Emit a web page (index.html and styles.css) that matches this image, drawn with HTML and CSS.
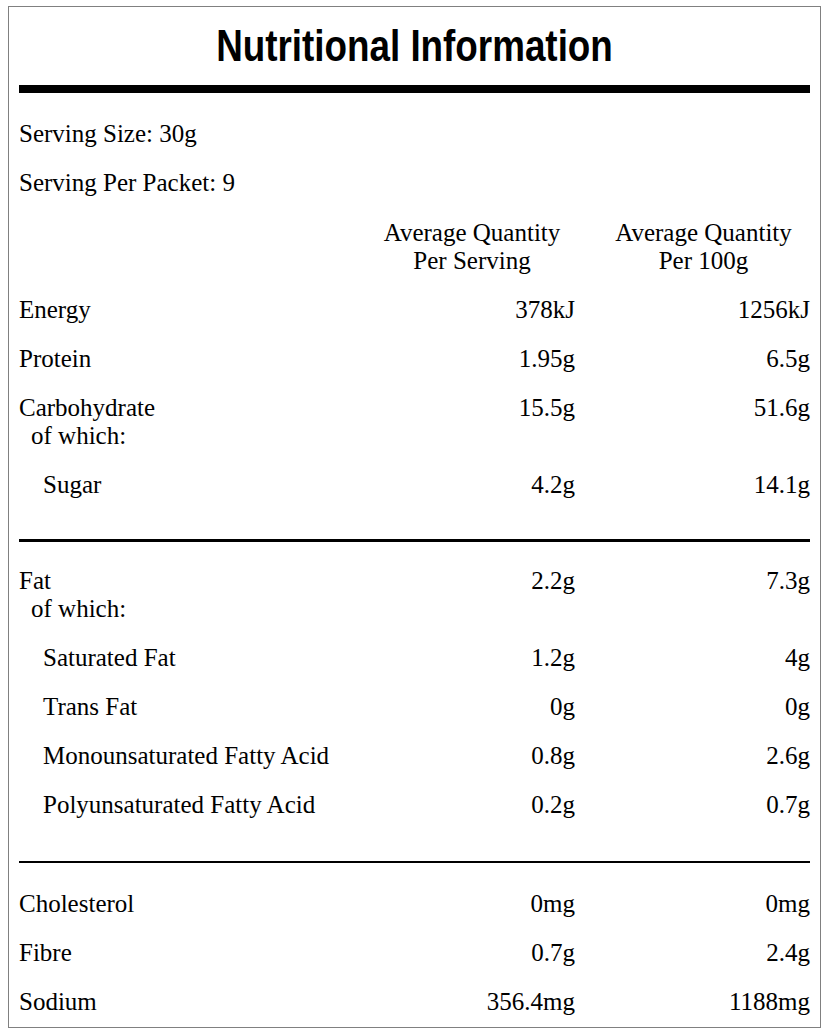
FILE: index.html
```html
<!DOCTYPE html>
<html lang="en">
<head>
<meta charset="utf-8">
<title>Nutritional Information</title>
<link rel="stylesheet" href="styles.css">
</head>
<body>
<div class="panel">
  <h1 class="title"><span class="title-text">Nutritional Information</span></h1>
  <div class="rule rule-thick"></div>
  <p class="meta">Serving Size: 30g</p>
  <p class="meta">Serving Per Packet: 9</p>

  <div class="table">
    <div class="row head">
      <div></div>
      <div class="colhead">Average Quantity<br>Per Serving</div>
      <div class="colhead">Average Quantity<br>Per 100g</div>
    </div>
    <div class="row">
      <div class="name">Energy</div><div class="val">378kJ</div><div class="val">1256kJ</div>
    </div>
    <div class="row">
      <div class="name">Protein</div><div class="val">1.95g</div><div class="val">6.5g</div>
    </div>
    <div class="row">
      <div class="name">Carbohydrate<br><span class="sub1">of which:</span></div><div class="val">15.5g</div><div class="val">51.6g</div>
    </div>
    <div class="row">
      <div class="name sub2">Sugar</div><div class="val">4.2g</div><div class="val">14.1g</div>
    </div>

    <div class="rule rule-mid"></div>

    <div class="row">
      <div class="name">Fat<br><span class="sub1">of which:</span></div><div class="val">2.2g</div><div class="val">7.3g</div>
    </div>
    <div class="row">
      <div class="name sub2">Saturated Fat</div><div class="val">1.2g</div><div class="val">4g</div>
    </div>
    <div class="row">
      <div class="name sub2">Trans Fat</div><div class="val">0g</div><div class="val">0g</div>
    </div>
    <div class="row">
      <div class="name sub2">Monounsaturated Fatty Acid</div><div class="val">0.8g</div><div class="val">2.6g</div>
    </div>
    <div class="row">
      <div class="name sub2">Polyunsaturated Fatty Acid</div><div class="val">0.2g</div><div class="val">0.7g</div>
    </div>

    <div class="rule rule-thin"></div>

    <div class="row">
      <div class="name">Cholesterol</div><div class="val">0mg</div><div class="val">0mg</div>
    </div>
    <div class="row">
      <div class="name">Fibre</div><div class="val">0.7g</div><div class="val">2.4g</div>
    </div>
    <div class="row">
      <div class="name">Sodium</div><div class="val">356.4mg</div><div class="val">1188mg</div>
    </div>
  </div>
</div>
</body>
</html>
```

FILE: styles.css
```css
html, body {
  margin: 0;
  padding: 0;
  background: #ffffff;
}

body {
  padding: 6px 0 0 8px;
  font-family: "Liberation Serif", "Times New Roman", serif;
  font-size: 25px;
  line-height: 28px;
  color: #000;
}

.panel {
  box-sizing: border-box;
  width: 813px;
  border: 1px solid #808080;
  padding: 0 10px 11px 10px;
}

.title {
  margin: 0;
  padding-top: 16px;
  height: 62px;
  box-sizing: border-box;
  text-align: center;
  font-family: "Liberation Sans Narrow", "Liberation Sans", Arial, sans-serif;
  font-weight: bold;
  font-size: 45px;
  line-height: 46px;
}

.title-text {
  display: inline-block;
  transform: scaleX(0.818);
  transform-origin: center;
}

.rule {
  background: #000;
}

.rule-thick {
  height: 8px;
  margin-top: 16px;
}

.meta {
  margin: 27px 0 0 0;
}

.meta + .meta {
  margin-top: 21px;
}

.table {
  display: flex;
  flex-direction: column;
  margin-top: 22px;
}

.row {
  display: grid;
  grid-template-columns: 1fr 206px 213px;
  column-gap: 22px;
  margin-bottom: 21px;
}

.colhead {
  text-align: center;
}

.val {
  text-align: right;
}

.sub1 {
  padding-left: 12px;
}

.sub2 {
  padding-left: 24px;
}

.rule-mid {
  height: 3px;
  margin: 19px 0 25px 0;
}

.rule-thin {
  height: 2px;
  margin: 21px 0 27px 0;
}

.table .row:last-child {
  margin-bottom: 0;
}
```
